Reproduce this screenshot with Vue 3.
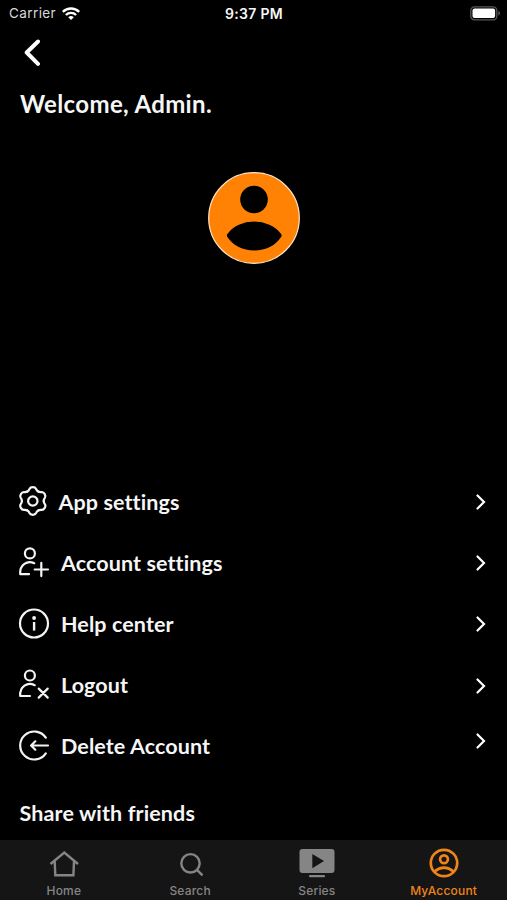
<script setup>
const rows = [
  { id: 'settings', label: 'App settings' },
  { id: 'account', label: 'Account settings' },
  { id: 'help', label: 'Help center' },
  { id: 'logout', label: 'Logout' },
  { id: 'delete', label: 'Delete Account' }
]

const tabs = [
  { id: 'home', label: 'Home' },
  { id: 'search', label: 'Search' },
  { id: 'series', label: 'Series' },
  { id: 'me', label: 'MyAccount' }
]

// One gear tooth, repeated every 60 degrees
const tooth = 'M-5.45 -9.44Q-3.98 -10.29 -3.3 -12Q-2.5 -13.8 0 -13.8T3.3 -12Q3.98 -10.29 5.45 -9.44'
const toothPath = tooth.replace('T3.3 -12', 'Q2.5 -13.8 3.3 -12')
const toothAngles = [0, 60, 120, 180, 240, 300]
</script>

<template>
  <div class="screen">
    <header class="status">
      <div class="carrier">
        <span>Carrier</span>
        <svg class="wifi" width="18" height="14" viewBox="0 0 18 14" fill="none" stroke="#fff" stroke-width="2.4">
          <path d="M.8 4.9C5.5.3 12.500.3 17.200 4.900" />
          <path d="M3.900 8C6.800 5.200 11.200 5.200 14.100 8" />
          <path d="M6.200 10.200Q9 7.900 11.800 10.200L9 13Z" fill="#fff" stroke="none" />
        </svg>
      </div>
      <span class="time">9:37 PM</span>
      <svg class="battery" width="31" height="15" viewBox="0 0 31 15">
        <rect x=".8" y=".8" width="26" height="13" rx="3.600" fill="none" stroke="#58585a" stroke-width="1.300" />
        <rect x="2.500" y="2.500" width="22.600" height="9.600" rx="2" fill="#fff" />
        <path d="M28.300 5v4.600Q30 9 30 7.300T28.300 5Z" fill="#58585a" />
      </svg>
    </header>

    <svg class="back" width="18" height="28" viewBox="0 0 18 28" fill="none" stroke="#fff" stroke-width="4" stroke-linecap="round">
      <path d="M15 2.500 3.700 13.500l11.300 11.300" stroke-linejoin="round" />
    </svg>
    <h1>Welcome, Admin.</h1>

    <svg class="avatar" width="94" height="94" viewBox="0 0 94 94">
      <circle cx="47" cy="47" r="45.300" fill="#ff8204" stroke="#ffe6c8" stroke-width="1.200" />
      <circle cx="47" cy="28.500" r="13.800" />
      <path d="M21 63.500C32 47.300 62 47.300 73.500 63.500Q74.200 64.500 73.500 65.500C61.500 83 33 83 21 65.500Q20.300 64.500 21 63.500Z" stroke="#000" stroke-linejoin="round" stroke-width="1.500" />
    </svg>

    <ul class="menu">
      <li v-for="row in rows" :key="row.id" :class="row.id">
        <svg class="icon" width="32" height="31" viewBox="0 0 32 31" fill="none" stroke="#f4f4f4" stroke-width="2.2" stroke-linecap="round" stroke-linejoin="round">
          <g v-if="row.id === 'settings'" transform="translate(14.8 15)">
            <path v-for="a in toothAngles" :key="a" :d="toothPath" :transform="`rotate(${a})`" />
            <circle r="4.700" />
          </g>
          <template v-else-if="row.id === 'account'">
            <circle cx="11.900" cy="6.400" r="5" />
            <path d="M16.200 16.200C9.500 13 1.500 17.500 2.200 27.200H11M16.700 22.500h13.300M23.300 15.900v13.200" />
          </template>
          <template v-else-if="row.id === 'help'">
            <circle cx="16" cy="15.500" r="14" />
            <path d="M16.100 14v8.600" stroke-width="2.400" stroke-linecap="butt" />
            <circle cx="16.100" cy="10" r="1.900" fill="#f4f4f4" stroke="none" />
          </template>
          <template v-else-if="row.id === 'logout'">
            <circle cx="11.900" cy="6.500" r="5" />
            <path d="M16.700 16.200C9.500 12.500 1.500 17.500 2.200 27H12M20.700 19.600l9 9M29.700 19.600l-9 9" />
          </template>
          <template v-else>
            <path d="M27.800 7.700A14 14 0 1 0 27.800 23.300M30 15.500H13.300M17.300 11.300 13.100 15.500l4.200 4.200" />
          </template>
        </svg>
        <span class="label">{{ row.label }}</span>
        <svg class="chevron" width="12" height="18" viewBox="0 0 12 18" fill="none" stroke="#fff" stroke-width="2.200" stroke-linecap="round">
          <path d="m2.500 2.500 6.500 6.500-6.500 6.500" />
        </svg>
      </li>
    </ul>

    <h2>Share with friends</h2>

    <nav>
      <a v-for="tab in tabs" :key="tab.id" :class="tab.id">
        <svg width="36" height="32" viewBox="0 0 36 32" fill="none" stroke="currentColor" stroke-width="2.400">
          <path v-if="tab.id === 'home'" d="M4.500 16 18.300 4.500 32 16M8.700 13.200 9.300 27.300H27.400L28 13.200" />
          <g v-else-if="tab.id === 'search'">
            <circle cx="18.500" cy="15.300" r="9.200" />
            <path d="m25 21.800 5.500 5.500" />
          </g>
          <g v-else-if="tab.id === 'series'" fill="currentColor" stroke="none">
            <rect x=".5" y="1" width="35" height="24" rx="3" />
            <rect x="10" y="27" width="16" height="2.200" rx="1" />
            <path d="M13.300 6v14.200L25 13.100Z" fill="#151515" />
          </g>
          <g v-else stroke-width="2.700">
            <circle cx="18" cy="15" r="13.200" />
            <circle cx="18" cy="11.200" r="3.900" />
            <path d="M8.200 23.600Q18 15.800 27.800 23.600" />
          </g>
        </svg>
        <span>{{ tab.label }}</span>
      </a>
    </nav>
  </div>
</template>

<style>
body {
  background: #000;
}
</style>

<style scoped>
.screen {
  display: flex;
  flex-direction: column;
  width: 507px;
  height: 900px;
  overflow: hidden;
  background: #000;
  color: #f6f6f6;
  font-family: Lato, sans-serif;
}
svg {
  display: block;
  flex: none;
}
.status {
  display: grid;
  grid-template-columns: 1fr auto 1fr;
  align-items: center;
  height: 27px;
  padding: 0 6px 0 9px;
  font: 500 13px/27px Inter, sans-serif;
}
.carrier {
  display: flex;
  align-items: center;
  gap: 6px;
  color: #d8d8d8;
  font-size: 13.5px;
  font-weight: 400;
  letter-spacing: 0.4px;
}
.time {
  margin-right: 2px;
  font-size: 14px;
  font-weight: 600;
  letter-spacing: 0.3px;
}
.battery {
  justify-self: end;
}
.back {
  margin: 12px 0 0 23px;
}
h1 {
  margin: 22px 0 0 20px;
  font-size: 24px;
  font-weight: 700;
  line-height: 29px;
  letter-spacing: 0.35px;
}
.avatar {
  margin: 53px 0 0 207px;
}
.menu {
  margin: 206px 0 0;
  padding: 0 20px 0 18px;
  list-style: none;
}
li {
  display: flex;
  align-items: center;
  height: 61px;
}
.label {
  flex: 1;
  margin-left: 11px;
  font-size: 21.5px;
  font-weight: 700;
  line-height: 28px;
  letter-spacing: 0.1px;
}
.settings .label {
  margin-left: 8.5px;
}
.logout .chevron {
  margin-top: 2px;
}
.delete .chevron {
  margin-bottom: 9px;
}
h2 {
  margin: 23px 0 0 19.5px;
  font-size: 21.5px;
  font-weight: 700;
  line-height: 28px;
  letter-spacing: 0.13px;
}
nav {
  display: grid;
  grid-template-columns: repeat(4, 1fr);
  height: 60px;
  margin-top: auto;
  background: #151515;
  color: #858585;
}
nav a {
  display: flex;
  flex-direction: column;
  align-items: center;
  padding-top: 8px;
  font: 500 12px/16px Inter, sans-serif;
  letter-spacing: 0.2px;
}
nav span {
  margin-top: 3px;
}
.home {
  padding-left: 1px;
}
.me {
  color: #ef8418;
}
</style>
